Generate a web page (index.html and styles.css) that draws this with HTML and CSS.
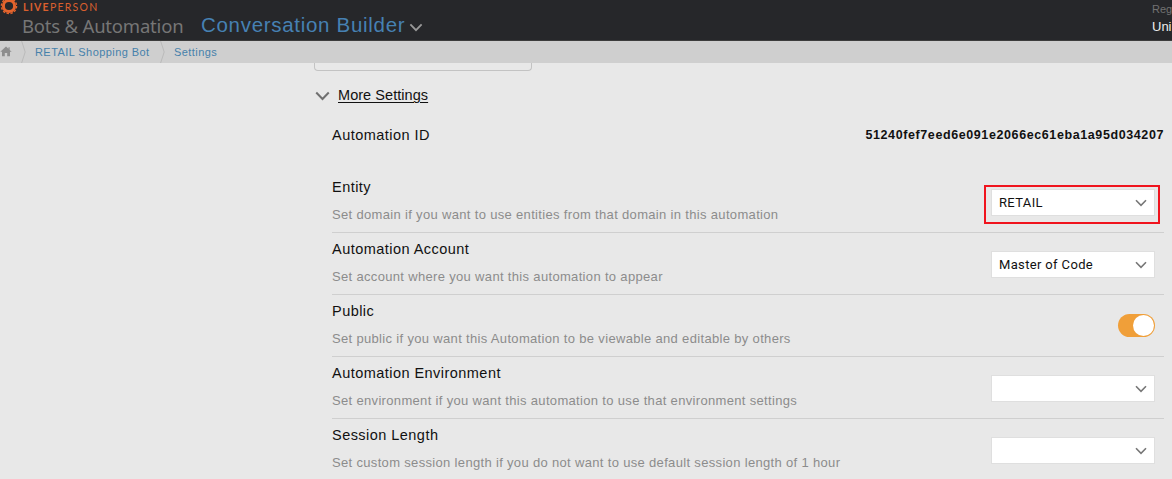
FILE: index.html
```html
<!DOCTYPE html>
<html lang="en">
<head>
<meta charset="utf-8">
<title>Conversation Builder</title>
<link rel="stylesheet" href="styles.css">
</head>
<body>
<svg class="defs" aria-hidden="true">
  <symbol id="chevron" viewBox="0 0 12 8"><path d="M1 1.2 6 6.4 11 1.2" fill="none" stroke="currentColor" stroke-width="1.6"/></symbol>
</svg>
<header class="topbar">
  <div class="brand">
    <svg class="gear" viewBox="0 0 18 18"><circle cx="9" cy="9" r="5.6" fill="none" stroke="#e4642d" stroke-width="3"/><circle cx="9" cy="9" r="7.6" fill="none" stroke="#e4642d" stroke-width="1.4" stroke-dasharray="2.4 1.58"/></svg>
    <div class="brand-text">
      <div class="live"><b>LIVE</b>PERSON</div>
      <div class="suite">Bots &amp; Automation</div>
    </div>
  </div>
  <div class="product"><span>Conversation Builder</span><svg class="product-chevron"><use href="#chevron"/></svg></div>
  <div class="region"><div class="region-label">Reg</div><div class="region-value">Uni</div></div>
</header>
<nav class="crumbs">
  <svg class="home" viewBox="0 0 12 11"><path d="M6 0.5 0.3 5.8H2V10.2H4.8V7H7.2V10.2H10V5.8H11.7L9.7 3.9V1.2H8.5V2.8Z" fill="#8e8e8e"/></svg>
  <svg class="sep" viewBox="0 0 5 22"><path d="M.6 0 4.2 11 .6 22" fill="none" stroke="#bababa"/></svg>
  <a class="bot">RETAIL Shopping Bot</a>
  <svg class="sep" viewBox="0 0 5 22"><path d="M.6 0 4.2 11 .6 22" fill="none" stroke="#bababa"/></svg>
  <a class="page">Settings</a>
</nav>
<main class="content">
  <div class="field-end"></div>
  <div class="more"><svg class="more-chevron"><use href="#chevron"/></svg><span class="more-label">More Settings</span></div>
  <div class="settings">
    <div class="row id-row"><div class="title">Automation ID</div><div class="hash">51240fef7eed6e091e2066ec61eba1a95d034207</div></div>
    <div class="row">
      <div><div class="title">Entity</div><div class="desc">Set domain if you want to use entities from that domain in this automation</div></div>
      <div class="highlight"><div class="select"><span>RETAIL</span><svg class="arrow"><use href="#chevron"/></svg></div></div>
    </div>
    <div class="row">
      <div><div class="title">Automation Account</div><div class="desc">Set account where you want this automation to appear</div></div>
      <div class="select"><span>Master of Code</span><svg class="arrow"><use href="#chevron"/></svg></div>
    </div>
    <div class="row">
      <div><div class="title">Public</div><div class="desc">Set public if you want this Automation to be viewable and editable by others</div></div>
      <div class="toggle"><div class="knob"></div></div>
    </div>
    <div class="row">
      <div><div class="title">Automation Environment</div><div class="desc">Set environment if you want this automation to use that environment settings</div></div>
      <div class="select"><span></span><svg class="arrow"><use href="#chevron"/></svg></div>
    </div>
    <div class="row">
      <div><div class="title">Session Length</div><div class="desc">Set custom session length if you do not want to use default session length of 1 hour</div></div>
      <div class="select"><span></span><svg class="arrow"><use href="#chevron"/></svg></div>
    </div>
  </div>
</main>
</body>
</html>
```
FILE: styles.css
```css
* { box-sizing: border-box; }
body { margin: 0; width: 1172px; height: 479px; overflow: hidden; background: #e8e8e8; font-family: "Liberation Sans", Arial, sans-serif; color: #111; white-space: nowrap; }
svg { display: block; flex: none; }
.defs { display: none; }
.topbar { height: 41px; background: #26272a; border-bottom: 1px solid #3c3c3c; display: flex; overflow: hidden; }
.brand { display: flex; width: 201px; }
.gear { width: 18px; height: 18px; margin-top: -3px; }
.brand-text { padding-left: 4px; }
.live { font: 10.5px/12px Lato, sans-serif; letter-spacing: 1.25px; color: #d95f2e; padding-left: 1px; margin-top: 1px; }
.suite { font: 18.5px/22px "Noto Sans", sans-serif; letter-spacing: -0.2px; color: #767676; margin-top: 2px; }
.product { display: flex; color: #4681b3; font-size: 20.5px; line-height: 24px; letter-spacing: 0.7px; padding-top: 13px; }
.product-chevron { width: 14px; height: 9px; color: #999; margin: 10px 0 0 4px; }
.region { margin-left: auto; width: 20px; }
.region-label { font-size: 11px; line-height: 14px; color: #727272; margin-top: 2px; }
.region-value { font-size: 13px; line-height: 16px; color: #eee; margin-top: 3px; }
.crumbs { height: 22px; background: #cfcfcf; display: flex; align-items: center; font-size: 11px; letter-spacing: 0.43px; color: #4681ab; }
.home { width: 12px; height: 11px; margin-top: -2px; }
.sep { width: 5px; height: 22px; margin-left: 9px; }
.bot { margin-left: 9px; width: 116px; }
.page { margin-left: 9px; }
.content { padding-left: 314px; }
.field-end { width: 218px; height: 8px; border: 1px solid #c3c3c3; border-top: 0; border-radius: 0 0 4px 4px; }
.more { display: flex; height: 48px; padding-top: 15px; }
.more-chevron { width: 15px; height: 10px; color: #707070; margin: 5px 8px 0 1px; }
.more-label { font-size: 14.5px; line-height: 18px; letter-spacing: 0.05px; text-decoration: underline; text-underline-offset: 2px; text-decoration-thickness: 1px; }
.settings { margin-left: 18px; width: 832px; }
.row { height: 62px; display: flex; justify-content: space-between; align-items: flex-start; border-bottom: 1px solid #cfcfcf; padding: 7px 9px 0 0; }
.id-row { height: 52px; border: 0; padding: 7px 0 0; }
.title { font-size: 14.5px; line-height: 18px; letter-spacing: 0.46px; }
.desc { font-size: 13px; line-height: 16px; margin-top: 11px; letter-spacing: 0.33px; color: #8c8c8c; }
.hash { font-size: 12.5px; font-weight: bold; line-height: 18px; letter-spacing: 0.6px; }
.select { width: 164px; height: 27px; margin-top: 11px; background: #fff; border: 1px solid #dfdfdf; display: flex; align-items: center; justify-content: space-between; padding: 0 7px; font: 13px/18px Roboto, sans-serif; letter-spacing: 0.35px; }
.arrow { width: 12px; height: 8px; color: #777; }
.highlight { width: 176px; height: 39px; margin: 7px -5px 0 0; border: 2px solid #f0141e; padding: 2px 4px 0 5px; }
.highlight .select { margin: 0; }
.toggle { width: 37px; height: 23px; margin-top: 12px; border-radius: 12px; background: #f09f39; padding: 1px; display: flex; justify-content: flex-end; }
.knob { width: 21px; height: 21px; border-radius: 50%; background: #fff; }
```
